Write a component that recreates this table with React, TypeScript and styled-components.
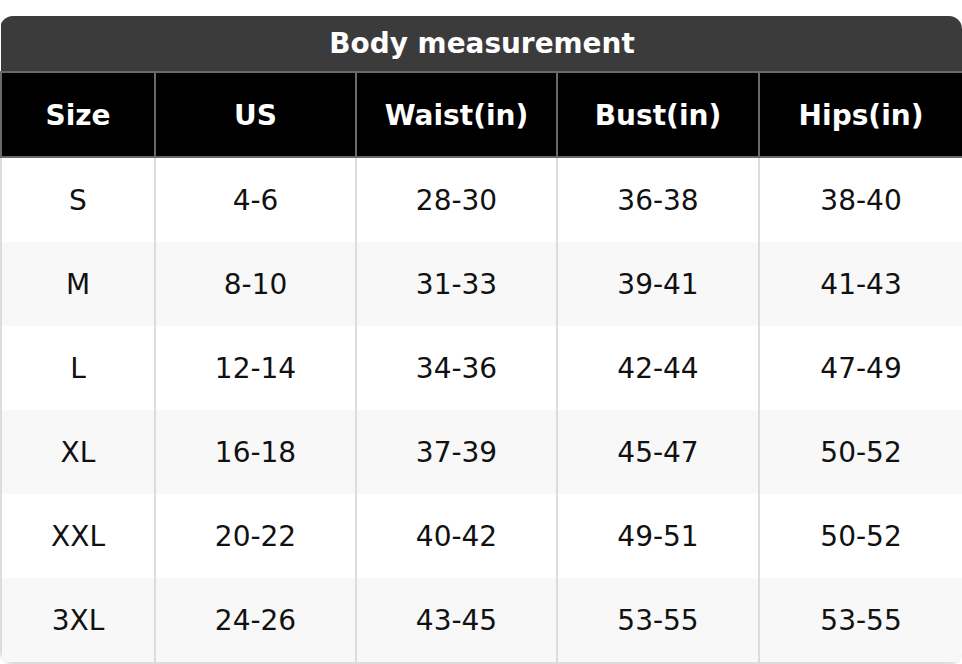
import React from "react";
import styled, { createGlobalStyle } from "styled-components";

const GlobalStyle = createGlobalStyle`
  html, body {
    margin: 0;
    padding: 0;
    background: #ffffff;
  }
  body {
    font-family: "DejaVu Sans", "Liberation Sans", sans-serif;
  }
`;

const rows = [
  ["S", "4-6", "28-30", "36-38", "38-40"],
  ["M", "8-10", "31-33", "39-41", "41-43"],
  ["L", "12-14", "34-36", "42-44", "47-49"],
  ["XL", "16-18", "37-39", "45-47", "50-52"],
  ["XXL", "20-22", "40-42", "49-51", "50-52"],
  ["3XL", "24-26", "43-45", "53-55", "53-55"],
];

const headers = ["Size", "US", "Waist(in)", "Bust(in)", "Hips(in)"];
const widths = [154, 201, 201, 202, 204];

export default function App() {
  return (
    <>
      <GlobalStyle />
      <Page>
        <Card>
          <Table>
            <colgroup>
              {widths.map((w, i) => (
                <col key={i} style={{ width: w }} />
              ))}
            </colgroup>
            <thead>
              <tr>
                <Title colSpan={5}>Body measurement</Title>
              </tr>
              <tr>
                {headers.map((h) => (
                  <HeadCell key={h}>{h}</HeadCell>
                ))}
              </tr>
            </thead>
            <tbody>
              {rows.map((row, i) => (
                <Row key={row[0]} $striped={i % 2 === 1}>
                  {row.map((v, j) => (
                    <Cell key={j}>{v}</Cell>
                  ))}
                </Row>
              ))}
            </tbody>
          </Table>
        </Card>
      </Page>
    </>
  );
}

const Page = styled.div`
  padding-top: 16px;
  width: 962px;
`;

const Card = styled.div`
  width: 962px;
  border-radius: 13px;
  overflow: hidden;
  box-shadow: 0 1px 2px rgba(0, 0, 0, 0.12);
`;

const Table = styled.table`
  width: 100%;
  table-layout: fixed;
  border-collapse: collapse;
  font-size: 28px;
`;

const Title = styled.th`
  height: 55px;
  padding: 0;
  background: #3b3b3b;
  color: #ffffff;
  font-size: 27.9px;
  font-weight: bold;
  text-align: center;
  border-bottom: 2px solid #6a6a6a;
`;

const HeadCell = styled.th`
  height: 81px;
  padding: 2px 0 0;
  background: #000000;
  color: #ffffff;
  font-weight: bold;
  text-align: center;
  border: 2px solid #6a6a6a;
  border-top: none;
`;

const Row = styled.tr<{ $striped: boolean }>`
  background: ${(p) => (p.$striped ? "#f8f8f8" : "#ffffff")};
`;

const Cell = styled.td`
  height: 84px;
  padding: 0;
  text-align: center;
  color: #111111;
  border-left: 2px solid #dddddd;
  border-right: 2px solid #dddddd;
  tr:last-child > & {
    border-bottom: 2px solid #dddddd;
  }
`;
